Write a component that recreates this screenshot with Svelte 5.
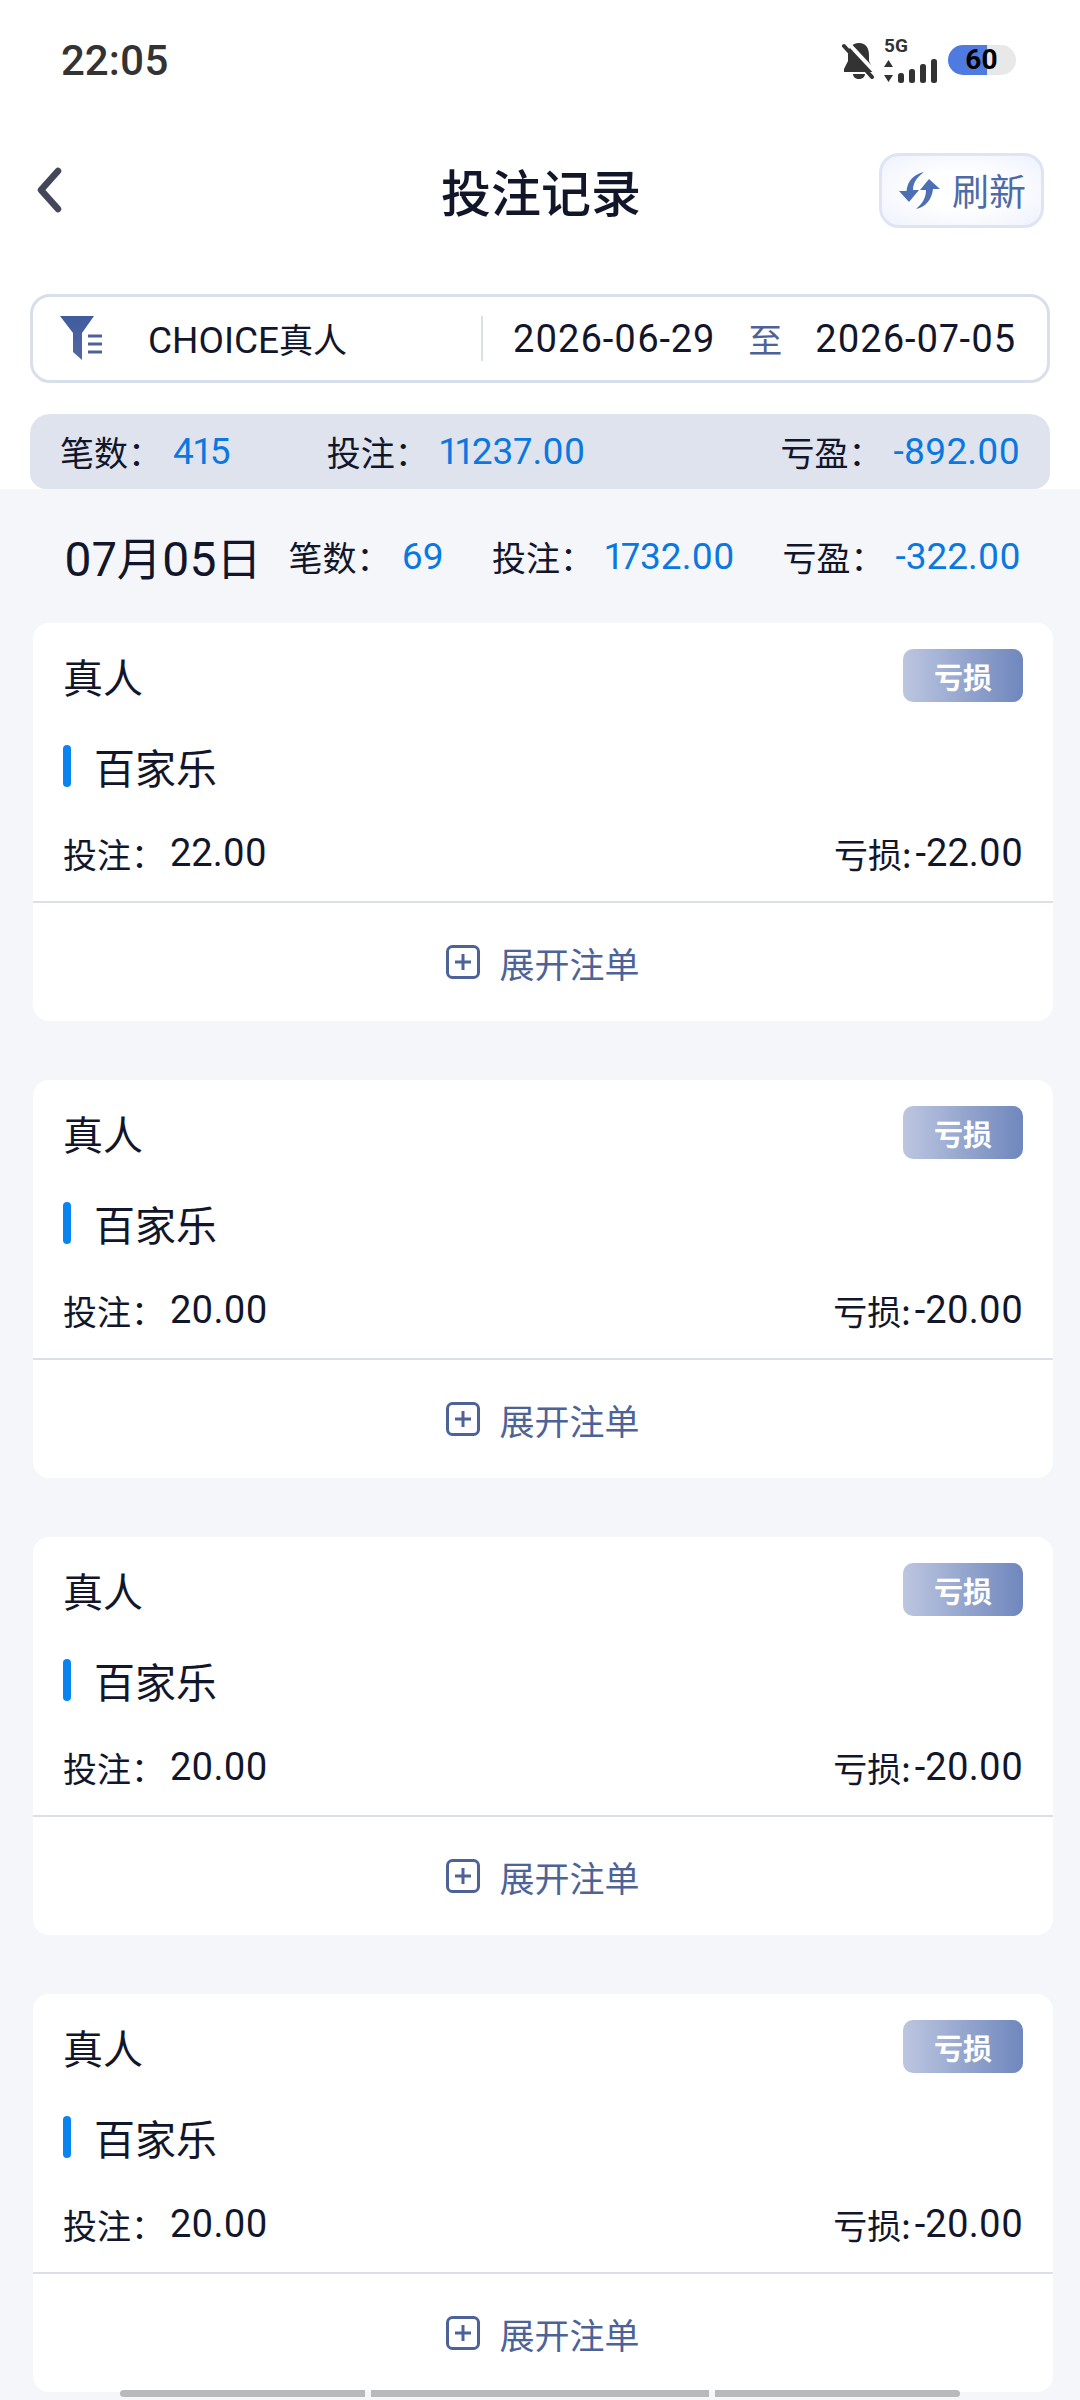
<script>
	const cards = [
		{ bet: '22.00', loss: '-22.00' },
		{ bet: '20.00', loss: '-20.00' },
		{ bet: '20.00', loss: '-20.00' },
		{ bet: '20.00', loss: '-20.00' }
	];
</script>

<div class="page">
	<header class="status">
		<span class="time">22:05</span>
		<div class="status-icons">
			<svg class="bell" width="32" height="37" viewBox="0 0 32 37">
				<path fill="#333" d="M17 1C10 1 6 6 6 13v6L2 27v3h29v-3l-4-8v-6C27 6 24 1 17 1zM11 32h12c0 3-3 5-6 5s-6-2-6-5z" />
				<path stroke="#fff" stroke-width="4" d="M4 -1 35 32" />
				<path stroke="#333" stroke-width="4" stroke-linecap="round" d="M2 4 30 35" />
			</svg>
			<div class="signal">
				<span class="five-g">5G</span>
				<svg width="55" height="24" viewBox="0 0 55 24">
					<path fill="#333" d="M4.500 1 9 8H0zM4.500 23 0 16h9z" />
					<rect x="14" y="14" width="6" height="10" rx="2.500" fill="#333" />
					<rect x="25" y="10" width="6" height="14" rx="2.500" fill="#333" />
					<rect x="36" y="5" width="6" height="19" rx="2.500" fill="#333" />
					<rect x="47" y="0" width="6" height="24" rx="2.500" fill="#333" />
				</svg>
			</div>
			<div class="battery">60</div>
		</div>
	</header>

	<nav class="nav">
		<svg class="back" width="26" height="46" viewBox="0 0 26 46">
			<path d="M22 4 5 23l17 19" fill="none" stroke="#44475a" stroke-width="6.500" stroke-linecap="round" stroke-linejoin="round" />
		</svg>
		<h1>投注记录</h1>
		<div class="refresh">
			<svg width="41" height="37" viewBox="0 0 41 37">
				<path fill="#4f6fb5" d="M25 0C15 2 8.500 9 7.500 19H0l10 11 10-12h-6C14 11 18 5 25 0z" />
				<path fill="#4f6fb5" d="M17 37c10-2 16-10 17-20h7L30 7 21 18h6c0 8-4 14-10 19z" />
			</svg>
			<span>刷新</span>
		</div>
	</nav>

	<section class="filter">
		<div class="filter-left">
			<svg width="42" height="45" viewBox="0 0 42 45">
				<defs>
					<linearGradient id="funnel" x1="0" y1="0" x2="0" y2="1">
						<stop offset="0" stop-color="#3f5c9e" />
						<stop offset="1" stop-color="#54689f" />
					</linearGradient>
				</defs>
				<path fill="url(#funnel)" d="M0 0h34L22 17v27l-9-8V17z" />
				<path stroke="#4d6398" stroke-width="3" d="M28 20h14M28 28h14M28 36h14" />
			</svg>
			<span class="choice"><span class="latin">CHOICE</span>真人</span>
		</div>
		<div class="dates">
			<span class="date">2026-06-29</span>
			<span class="to">至</span>
			<span class="date">2026-07-05</span>
		</div>
	</section>

	<section class="totals">
		<div class="stat first"><span>笔数：</span><b>415</b></div>
		<div class="stat second"><span>投注：</span><b>11237.00</b></div>
		<div class="stat last"><span>亏盈：</span><b>-892.00</b></div>
	</section>

	<main class="list">
		<div class="day">
			<span class="day-date"><span class="day-num">07</span>月<span class="day-num">05</span>日</span>
			<div class="stat"><span>笔数：</span><b>69</b></div>
			<div class="stat"><span>投注：</span><b>1732.00</b></div>
			<div class="stat"><span>亏盈：</span><b>-322.00</b></div>
		</div>

		{#each cards as card}
			<article class="card">
				<div class="card-head">
					<span class="kind">真人</span>
					<span class="badge">亏损</span>
				</div>
				<div class="game"><i></i><span>百家乐</span></div>
				<div class="amounts">
					<div class="amount"><span class="bet-label">投注：</span><span class="num">{card.bet}</span></div>
					<div class="amount"><span class="loss-label">亏损:</span><span class="num">{card.loss}</span></div>
				</div>
				<div class="expand">
					<svg width="34" height="34" viewBox="0 0 34 34">
						<rect x="1.500" y="1.500" width="31" height="31" rx="5" fill="none" stroke="#4d6398" stroke-width="3" />
						<path d="M9 17h16M17 9v16" stroke="#4d6398" stroke-width="3" />
					</svg>
					<span>展开注单</span>
				</div>
			</article>
		{/each}
	</main>

	<div class="scrollbars"><i class="one"></i><i class="two"></i><i class="three"></i></div>
</div>

<style>
	:global(body) {
		background: #fff;
	}

	.page {
		position: relative;
		width: 1080px;
		height: 2400px;
		overflow: hidden;
		background: #fff;
		color: #12162b;
		font-family: 'Noto Sans CJK SC', 'Noto Sans', sans-serif;
		font-variant-numeric: proportional-nums;
	}

	.status {
		display: flex;
		justify-content: space-between;
		align-items: center;
		height: 120px;
		padding: 0 64px 0 61px;
		box-sizing: border-box;
	}

	.time {
		font-family: Roboto, sans-serif;
		font-size: 42px;
		font-weight: 500;
		color: #333;
	}

	.status-icons {
		display: flex;
		align-items: center;
	}

	.bell {
		margin-right: 10px;
	}

	.signal {
		display: flex;
		flex-direction: column;
		width: 55px;
		margin-right: 9px;
	}

	.five-g {
		font-family: Roboto, sans-serif;
		font-size: 19px;
		line-height: 15px;
		font-weight: 700;
		color: #333;
		margin-bottom: 6px;
	}

	.battery {
		width: 68px;
		height: 30px;
		padding-left: 17px;
		box-sizing: border-box;
		border-radius: 15px;
		background: linear-gradient(90deg, #4f7be0 57%, #e8e8e8 57%);
		font-family: Roboto, sans-serif;
		font-size: 28px;
		line-height: 30px;
		font-weight: 700;
		color: #000;
	}

	.nav {
		display: flex;
		align-items: center;
		justify-content: space-between;
		height: 112px;
		padding: 0 36px;
		margin-top: 14px;
		box-sizing: border-box;
		position: relative;
	}

	.nav h1 {
		margin: 0;
		font-size: 50px;
		font-weight: 500;
		line-height: 1;
		position: absolute;
		left: 441px;
	}

	.refresh {
		display: flex;
		align-items: center;
		gap: 12px;
		width: 165px;
		height: 75px;
		box-sizing: border-box;
		padding-left: 17px;
		border: 3px solid #dfe4f5;
		border-radius: 20px;
		background: radial-gradient(ellipse at 50% 50%, #fff 35%, #eef2fc 100%);
		font-size: 37px;
		color: #4f6aa8;
	}

	.filter {
		display: flex;
		align-items: center;
		justify-content: space-between;
		height: 89px;
		margin: 48px 30px 0;
		padding: 0 31px 0 27px;
		box-sizing: border-box;
		border: 3px solid #d9dfea;
		border-radius: 20px;
	}

	.filter-left {
		display: flex;
		align-items: center;
		gap: 46px;
		width: 421px;
		height: 45px;
		border-right: 2px solid #d9dfea;
	}

	.choice {
		font-size: 34px;
	}

	.latin {
		font-family: Roboto, sans-serif;
		font-size: 37px;
	}

	.dates {
		display: flex;
		justify-content: space-between;
		align-items: center;
		flex: 1;
		margin-left: 30px;
		font-size: 34px;
	}

	.date {
		font-family: Roboto, sans-serif;
		font-size: 38px;
		letter-spacing: 0.8px;
	}

	.to {
		color: #4d6398;
	}

	.totals {
		display: flex;
		align-items: center;
		height: 75px;
		margin: 31px 30px 0;
		padding: 0 30px;
		box-sizing: border-box;
		background: #dfe3ed;
		border-radius: 20px 20px 16px 16px;
	}

	.stat {
		display: flex;
		align-items: center;
		font-size: 34px;
	}

	.stat span {
		margin-right: 11px;
	}

	.stat b {
		font-family: Roboto, sans-serif;
		font-size: 37px;
		font-weight: 400;
		color: #0a78e0;
	}

	.stat.second {
		margin-left: 96px;
	}

	.stat.last {
		margin-left: auto;
	}

	.list {
		height: 1911px;
		background: #f4f6fa;
		padding: 0 27px 0 33px;
		box-sizing: border-box;
		display: flex;
		flex-direction: column;
	}

	.day {
		flex: none;
		display: flex;
		align-items: center;
		height: 134px;
		padding-left: 31px;
	}

	.day-date {
		font-size: 45px;
		margin-right: 27px;
	}

	.day-num {
		font-family: Roboto, sans-serif;
		font-size: 48px;
	}

	.day .stat + .stat {
		margin-left: 48px;
	}

	.card {
		flex: none;
		height: 398px;
		margin-bottom: 59px;
		padding-top: 26px;
		box-sizing: border-box;
		background: #fff;
		border-radius: 16px;
	}

	.card-head {
		display: flex;
		align-items: center;
		justify-content: space-between;
		height: 53px;
		padding: 0 30px;
	}

	.kind {
		font-size: 40px;
	}

	.badge {
		display: flex;
		align-items: center;
		justify-content: center;
		width: 120px;
		height: 53px;
		border-radius: 10px;
		background: linear-gradient(90deg, #bcc6e0, #6f87bd);
		color: #fff;
		font-size: 29px;
		font-weight: 700;
	}

	.game {
		display: flex;
		align-items: center;
		gap: 23px;
		height: 42px;
		margin-top: 43px;
		padding-left: 30px;
		font-size: 41px;
	}

	.game i {
		width: 8px;
		height: 42px;
		border-radius: 4px;
		background: #0a84f0;
	}

	.amounts {
		display: flex;
		justify-content: space-between;
		align-items: center;
		height: 48px;
		margin-top: 42px;
		padding: 0 30px;
		font-size: 34px;
	}

	.amount {
		display: flex;
		align-items: center;
	}

	.bet-label {
		margin-right: 5px;
	}

	.loss-label {
		margin-right: 4px;
	}

	.num {
		font-family: Roboto, sans-serif;
		font-size: 38px;
	}

	.expand {
		display: flex;
		align-items: center;
		justify-content: center;
		gap: 19px;
		height: 120px;
		margin-top: 24px;
		border-top: 2px solid #dcdfe8;
		box-sizing: border-box;
		font-size: 35px;
		color: #4d6398;
	}

	.scrollbars {
		position: absolute;
		left: 120px;
		top: 2390px;
		display: flex;
		gap: 6px;
	}

	.scrollbars i {
		height: 7px;
		background: #b8b9bb;
	}

	.one {
		width: 245px;
		border-radius: 4px 0 0 4px;
	}

	.two {
		width: 338px;
	}

	.three {
		width: 245px;
		border-radius: 0 4px 4px 0;
	}
</style>
